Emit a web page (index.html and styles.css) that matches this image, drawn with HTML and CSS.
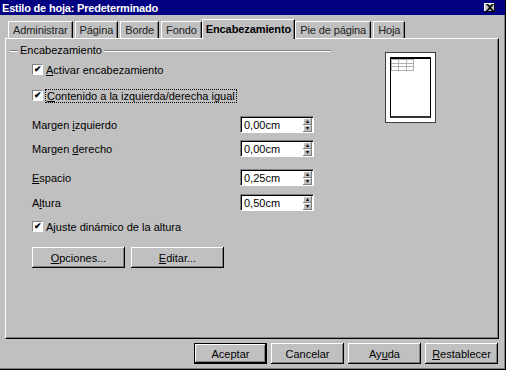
FILE: index.html
```html
<!DOCTYPE html>
<html>
<head>
    <title>Estilo de hoja: Predeterminado</title>
    <meta charset="utf-8" />
    <link rel="stylesheet" href="styles.css">
</head>
<body>
    <div class="window">
        <div class="titlebar">
            <span class="title">Estilo de hoja: Predeterminado</span>
            <span class="close">
                <svg width="8" height="7" viewBox="0 0 8 7"><path d="M0 0h2l2 2 2-2h2L5 3.5 8 7H6L4 5 2 7H0l3-3.5z" fill="#000"/></svg>
            </span>
        </div>
        <div class="tabs">
            <div class="tab">Administrar</div>
            <div class="tab">Página</div>
            <div class="tab">Borde</div>
            <div class="tab">Fondo</div>
            <div class="tab active">Encabezamiento</div>
            <div class="tab">Pie de página</div>
            <div class="tab">Hoja</div>
        </div>
        <div class="panel">
            <div class="main">
                <div class="group"><span>Encabezamiento</span></div>
                <div class="rows">
                    <label class="check row-a"><span class="box">&#10004;</span><span><u>A</u>ctivar encabezamiento</span></label>
                    <label class="check row-b"><span class="box">&#10004;</span><span class="focus"><u>C</u>ontenido a la izquierda/derecha igual</span></label>
                    <div class="field row-c"><span>Margen <u>i</u>zquierdo</span><span class="spin"><span class="val">0,00cm</span><span class="arrows"><i>&#9652;</i><i>&#9662;</i></span></span></div>
                    <div class="field row-d"><span>Margen <u>d</u>erecho</span><span class="spin"><span class="val">0,00cm</span><span class="arrows"><i>&#9652;</i><i>&#9662;</i></span></span></div>
                    <div class="field row-e"><span><u>E</u>spacio</span><span class="spin"><span class="val">0,25cm</span><span class="arrows"><i>&#9652;</i><i>&#9662;</i></span></span></div>
                    <div class="field row-f"><span>A<u>l</u>tura</span><span class="spin"><span class="val">0,50cm</span><span class="arrows"><i>&#9652;</i><i>&#9662;</i></span></span></div>
                    <label class="check row-g"><span class="box">&#10004;</span><span>A<u>j</u>uste dinámico de la altura</span></label>
                    <div class="buttons row-h">
                        <div class="btn"><u>O</u>pciones...</div>
                        <div class="btn"><u>E</u>ditar...</div>
                    </div>
                </div>
            </div>
            <div class="preview">
                <div class="page">
                    <div class="header-grid">
                        <i></i><i></i><i></i><i></i><i></i><i></i><i></i><i></i><i></i>
                    </div>
                </div>
            </div>
        </div>
        <div class="footer">
            <div class="btn default">Aceptar</div>
            <div class="btn">Cancelar</div>
            <div class="btn">Ay<u>u</u>da</div>
            <div class="btn"><u>R</u>establecer</div>
        </div>
    </div>
</body>
</html>
```
FILE: styles.css
```css
body {
    margin: 0;
    font-family: 'Liberation Sans', Arial, sans-serif;
    font-size: 11px;
    color: #000;
    background-color: #c0c0c0;
}
.window {
    width: 506px;
    height: 370px;
    box-sizing: border-box;
    background-color: #c0c0c0;
    border-right: 1px solid #000;
    border-bottom: 1px solid #000;
    box-shadow: inset -1px -1px 0 #808080;
    overflow: hidden;
}
.titlebar {
    height: 15px;
    background-color: #000080;
    color: #fff;
    display: flex;
    justify-content: space-between;
    align-items: center;
    padding: 0 10px 0 2px;
}
.title {
    font-weight: bold;
    letter-spacing: -0.2px;
}
.close {
    width: 11px;
    height: 9px;
    background-color: #c0c0c0;
    box-shadow: inset -1px -1px 0 #000, inset 1px 1px 0 #fff;
    display: flex;
    align-items: center;
    justify-content: center;
}
.tabs {
    display: flex;
    align-items: flex-end;
    height: 20px;
    margin: 3px 0 0 8px;
}
.tab {
    height: 17px;
    box-sizing: border-box;
    padding: 2px 4px 0 4px;
    margin-right: 2px;
    border-top: 1px solid #fff;
    border-left: 1px solid #fff;
    border-right: 1px solid #000;
    box-shadow: inset -1px 0 0 #808080;
    color: #222;
    white-space: nowrap;
    letter-spacing: -0.1px;
}
.tab.active {
    height: 20px;
    font-weight: bold;
    padding: 3px 3px 0 3px;
    margin: 0 0 -1px -2px;
    position: relative;
    background-color: #c0c0c0;
    color: #000;
    z-index: 1;
}
.panel {
    height: 301px;
    box-sizing: border-box;
    margin: 0 6px 0 5px;
    border-top: 1px solid #fff;
    border-left: 1px solid #fff;
    border-right: 1px solid #000;
    border-bottom: 1px solid #000;
    box-shadow: inset -1px -1px 0 #808080;
    display: flex;
}
.main {
    width: 320px;
    margin-left: 4px;
    padding-top: 5px;
}
.group {
    height: 13px;
    position: relative;
    padding-left: 8px;
}
.group::before {
    content: "";
    position: absolute;
    left: 0;
    right: 0;
    top: 6px;
    border-top: 1px solid #808080;
    border-bottom: 1px solid #fff;
}
.group span {
    position: relative;
    background-color: #c0c0c0;
    padding: 0 2px;
    line-height: 13px;
}
.rows {
    padding-left: 22px;
    display: flex;
    flex-direction: column;
}
.check {
    display: flex;
    align-items: center;
    height: 13px;
    gap: 3px;
}
.box {
    width: 11px;
    height: 11px;
    box-sizing: border-box;
    background-color: #fff;
    border-top: 1px solid #808080;
    border-left: 1px solid #808080;
    border-right: 1px solid #fff;
    border-bottom: 1px solid #fff;
    font-size: 9px;
    line-height: 9px;
    text-align: center;
    font-weight: bold;
}
.focus {
    outline: 1px dotted #000;
    padding: 0 1px;
}
.field {
    display: flex;
    align-items: center;
    justify-content: space-between;
    width: 282px;
    height: 17px;
}
.spin {
    display: flex;
    height: 17px;
    box-sizing: border-box;
    border-top: 1px solid #808080;
    border-left: 1px solid #808080;
    border-right: 1px solid #fff;
    border-bottom: 1px solid #fff;
    box-shadow: inset 1px 1px 0 #000;
    background-color: #fff;
}
.val {
    width: 62px;
    padding: 2px 0 0 3px;
    box-sizing: border-box;
}
.arrows {
    width: 9px;
    display: flex;
    flex-direction: column;
    margin: 1px 1px 1px 0;
}
.arrows i {
    flex: 1;
    font-style: normal;
    font-size: 6px;
    line-height: 7px;
    text-align: center;
    background-color: #c0c0c0;
    box-shadow: inset -1px -1px 0 #808080, inset 1px 1px 0 #fff;
}
.row-a { margin-top: 6px; }
.row-b { margin-top: 13px; }
.row-c { margin-top: 14px; }
.row-d { margin-top: 7px; }
.row-e { margin-top: 12px; }
.row-f { margin-top: 8px; }
.row-g { margin-top: 9px; }
.row-h { margin-top: 14px; }
.buttons {
    display: flex;
    gap: 6px;
}
.btn {
    width: 93px;
    height: 21px;
    box-sizing: border-box;
    display: flex;
    align-items: center;
    justify-content: center;
    box-shadow: inset -1px -1px 0 #000, inset 1px 1px 0 #fff, inset -2px -2px 0 #808080;
}
.preview {
    margin: 13px 0 0 55px;
    width: 51px;
    height: 71px;
    box-sizing: border-box;
    border: 1px solid #404040;
    background-color: #fff;
    padding: 4px;
}
.page {
    height: 100%;
    box-sizing: border-box;
    border: 1px solid #000;
    border-top-width: 2px;
    border-bottom-width: 2px;
    border-bottom-color: #333;
}
.header-grid {
    width: 21px;
    height: 10px;
    display: grid;
    grid-template-columns: repeat(3, 1fr);
    border: 1px solid #b0b0b0;
    gap: 1px;
    background-color: #b0b0b0;
}
.header-grid i {
    background-color: #fff;
}
.footer {
    display: flex;
    justify-content: flex-end;
    gap: 4px;
    margin: 4px 7px 0 0;
}
.footer .btn {
    width: 73px;
}
.footer .btn.default {
    box-shadow: inset 0 0 0 1px #000, inset -2px -2px 0 #000, inset 2px 2px 0 #fff, inset -3px -3px 0 #808080;
}
```
